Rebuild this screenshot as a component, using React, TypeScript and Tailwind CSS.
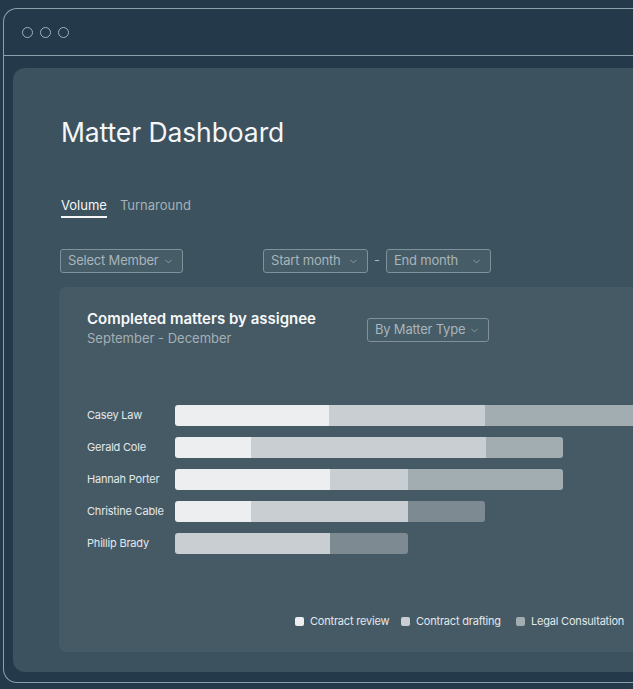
import { ChevronDown } from "lucide-react";

const LIGHT = "bg-[#eceef0]";
const MID = "bg-[#c8ced1]";
const DARK = "bg-[#a2adb1]";
const DARKER = "bg-[#7d8a91]";

const rows = [
  { name: "Casey Law", segs: [[154, LIGHT], [156, MID], [170, DARK]] },
  { name: "Gerald Cole", segs: [[76, LIGHT], [235, MID], [77, DARK]] },
  { name: "Hannah Porter", segs: [[155, LIGHT], [78, MID], [155, DARK]] },
  { name: "Christine Cable", segs: [[76, LIGHT], [157, MID], [77, DARKER]] },
  { name: "Phillip Brady", segs: [[155, MID], [78, DARKER]] },
] as const;

const legend = [
  { label: "Contract review", color: "bg-[#eceef0]", width: "w-[106px]" },
  { label: "Contract drafting", color: "bg-[#c8ced1]", width: "w-[115px]" },
  { label: "Legal Consultation", color: "bg-[#a2adb1]", width: "w-[120px]" },
];

function Select({ label, width }: { label: string; width: string }) {
  return (
    <div
      className={`${width} h-[24px] shrink-0 flex items-center justify-between pl-[7px] pr-[8px] rounded-[3px] border border-[#7f929c] bg-[#465c67] text-[13px] tracking-[-0.2px] whitespace-nowrap text-[#a9b5bb]`}
    >
      <span>{label}</span>
      <ChevronDown size={11} strokeWidth={1.5} className="shrink-0 text-[#a9b5bb]" />
    </div>
  );
}

export default function App() {
  return (
    <div
      className="w-[633px] h-[689px] overflow-hidden bg-[#243a4a] pt-[8px] pl-[3px]"
      style={{ fontFamily: "Inter, 'Noto Sans', sans-serif" }}
    >
      <div className="w-[660px] h-[675px] flex flex-col border border-r-0 border-[#8aa0ab] rounded-l-[14px]">
        {/* Title bar */}
        <div className="h-[47px] shrink-0 flex items-center gap-[7px] pl-[18px] border-b border-[#8aa0ab]">
          <span className="w-[11px] h-[11px] rounded-full border border-[#9fb1ba]" />
          <span className="w-[11px] h-[11px] rounded-full border border-[#9fb1ba]" />
          <span className="w-[11px] h-[11px] rounded-full border border-[#9fb1ba]" />
        </div>

        <div className="flex-1 pl-[9px] pt-[12px] pb-[10px]">
          <div className="h-full bg-[#3c525e] rounded-l-[12px] pl-[47px] pt-[48px] pb-[20px] flex flex-col">
            <h1 className="text-[26.5px] leading-[32px] text-[#f4f6f7] font-normal tracking-[-0.1px] pl-[1px]">
              Matter Dashboard
            </h1>

            {/* Tabs */}
            <div className="mt-[46px] flex gap-[13px] pl-[1px] text-[13px] leading-[22px]">
              <div className="flex flex-col">
                <span className="text-[#f4f6f7]">Volume</span>
                <span className="h-[2px] bg-[#f4f6f7]" />
              </div>
              <span className="text-[#a4b1b8]">Turnaround</span>
            </div>

            {/* Filters */}
            <div className="mt-[31px] flex items-center">
              <Select label="Select Member" width="w-[123px]" />
              <div className="ml-[80px] flex items-center gap-[6px]">
                <Select label="Start month" width="w-[105px]" />
                <span className="text-[13px] text-[#a9b5bb]">-</span>
                <Select label="End month" width="w-[105px]" />
              </div>
            </div>

            {/* Chart card */}
            <div className="mt-[14px] flex-1 -ml-[1px] bg-[#465a65] rounded-l-[8px] pl-[28px] pt-[22px] flex flex-col">
              <div className="flex items-start">
                <div className="w-[280px]">
                  <div className="text-[15px] leading-[20px] font-semibold text-[#f6f8f9]">
                    Completed matters by assignee
                  </div>
                  <div className="text-[13px] leading-[18px] text-[#a4b0b7]">September - December</div>
                </div>
                <div className="mt-[9px]">
                  <Select label="By Matter Type" width="w-[122px]" />
                </div>
              </div>

              <div className="mt-[58px] flex flex-col gap-[11px]">
                {rows.map((r) => (
                  <div key={r.name} className="flex items-center h-[21px]">
                    <span className="w-[88px] text-[11px] text-[#e3e8eb] tracking-[-0.2px]">{r.name}</span>
                    <div className="flex h-[21px] rounded-[3px] overflow-hidden">
                      {r.segs.map(([w, c], i) => (
                        <div key={i} className={`${c} h-full`} style={{ width: w }} />
                      ))}
                    </div>
                  </div>
                ))}
              </div>

              <div className="mt-[59px] pl-[208px] flex items-center text-[11px] tracking-[-0.2px] text-[#e3e8eb]">
                {legend.map((l) => (
                  <div key={l.label} className={`${l.width} shrink-0 flex items-center gap-[6px] whitespace-nowrap`}>
                    <span className={`w-[9px] h-[9px] shrink-0 rounded-[2px] ${l.color}`} />
                    <span>{l.label}</span>
                  </div>
                ))}
              </div>
            </div>
          </div>
        </div>
      </div>
    </div>
  );
}
